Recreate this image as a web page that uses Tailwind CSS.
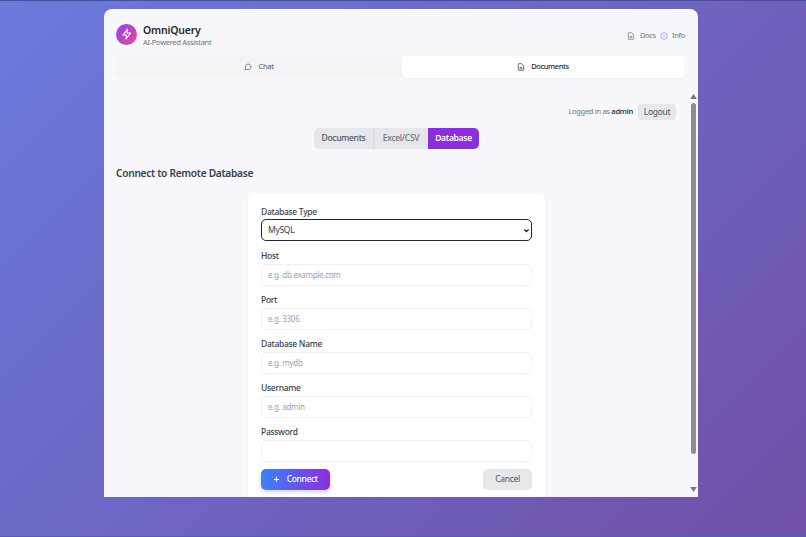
<!DOCTYPE html>
<html lang="en">
  <head>
    <meta charset="UTF-8" />
    <title>OmniQuery</title>
    <script src="https://cdn.jsdelivr.net/npm/@tailwindcss/browser@4"></script>
  </head>
  <body class="h-[537px] w-[806px] overflow-hidden border-t border-b border-t-[#474f8f] border-b-[#5d5cb4] bg-linear-[135deg,#6a7adc,#7150a8] font-['Noto_Sans',sans-serif] tracking-[-0.3px] text-[#374151]">
    <div class="w-[698px] pt-[8px] pl-[104px]">
      <div class="flex h-[488px] w-[594px] flex-col overflow-hidden rounded-t-[8px] bg-[#f8f8fc]">
        <!-- Header -->
        <div class="flex h-[47px] shrink-0 items-center justify-between pt-[3px] pr-[13px] pl-[12px]">
          <div class="flex items-center gap-[6px]">
            <div class="flex h-[21px] w-[21px] items-center justify-center rounded-full bg-linear-[135deg,#8b45e8,#ec4899]">
              <svg viewBox="0 0 24 24" class="h-[12px] w-[12px]" fill="none" stroke="white" stroke-width="2.2" stroke-linejoin="round"><path d="M13 2 4 14h7l-1 8 9-12h-7z" /></svg>
            </div>
            <div class="pt-[2px]">
              <div class="text-[10.5px] leading-[14px] font-semibold tracking-[-0.2px] text-[#1f2937]">OmniQuery</div>
              <div class="text-[7.5px] leading-[11px] text-[#6b7280]">AI-Powered Assistant</div>
            </div>
          </div>
          <div class="flex items-center pt-[3px] text-[7.5px] text-[#6b7280]">
            <svg viewBox="0 0 24 24" class="mr-[5px] h-[8px] w-[8px]" fill="none" stroke="#6b7280" stroke-width="2.2"><path d="M14 2H6a2 2 0 0 0-2 2v16a2 2 0 0 0 2 2h12a2 2 0 0 0 2-2V8zM8 13h8M8 17h8" /></svg>
            <span>Docs</span>
            <svg viewBox="0 0 24 24" class="mr-[4px] ml-[4px] h-[8px] w-[8px]" fill="none" stroke="#8b7fe8" stroke-width="2"><circle cx="12" cy="12" r="10" /><path d="M12 7v6M12 16v1" /></svg>
            <span>Info</span>
          </div>
        </div>

        <!-- Main tabs -->
        <div class="mr-[14px] ml-[12px] flex h-[22px] shrink-0 gap-[2px] rounded-[4px] bg-[#f4f4f6] text-[7.5px]">
          <div class="flex w-[284px] items-center justify-center gap-[6px] pl-[2px] text-[#4b5563]">
            <svg viewBox="0 0 24 24" class="h-[8px] w-[8px]" fill="none" stroke="#4b5563" stroke-width="2.2"><path d="M21 11.5a8.5 8.5 0 0 1-12.6 7.4L3 21l2-5A8.5 8.5 0 1 1 21 11.5z" /></svg>
            <span>Chat</span>
          </div>
          <div class="flex flex-1 items-center justify-center gap-[6px] rounded-[4px] bg-white font-medium tracking-[-0.4px] text-[#1f2937] shadow-[0_1px_2px_rgba(0,0,0,0.05)]">
            <svg viewBox="0 0 24 24" class="h-[8px] w-[8px]" fill="none" stroke="#374151" stroke-width="2.2"><path d="M14 2H6a2 2 0 0 0-2 2v16a2 2 0 0 0 2 2h12a2 2 0 0 0 2-2V8zM8 13h8M8 17h8" /></svg>
            <span>Documents</span>
          </div>
        </div>

        <div class="flex min-h-0 flex-1 pt-[16px]">
          <div class="min-w-0 flex-1 overflow-hidden">
            <!-- Login row -->
            <div class="mt-[10px] flex h-[16px] items-center justify-end gap-[5px] pr-[12px] text-[7.5px] text-[#6b7280]">
              <span>Logged in as <b class="font-semibold text-[#374151]">admin</b></span>
              <span class="flex h-[16px] w-[38px] items-center justify-center rounded-[4px] bg-[#e5e7eb] text-[8.5px] text-[#4b5563]">Logout</span>
            </div>

            <!-- Source tabs -->
            <div class="mt-[8px] flex justify-start pl-[210px] text-[8.5px] font-medium">
              <div class="flex h-[21px] overflow-hidden rounded-[5px]">
                <span class="flex w-[60px] items-center justify-center border-r border-[#d9dbe0] bg-[#e5e7eb] text-[#4b5563]">Documents</span>
                <span class="flex w-[54px] items-center justify-center bg-[#e5e7eb] text-[#6b7280]">Excel/CSV</span>
                <span class="flex w-[51px] items-center justify-center bg-[#8b2fdc] font-semibold text-white">Database</span>
              </div>
            </div>

            <h2 class="mt-[16px] pl-[12px] text-[10.2px] leading-[16px] font-semibold text-[#374151]">Connect to Remote Database</h2>

            <!-- Form -->
            <form class="mt-[12px] ml-[144px] h-[320px] w-[297px] rounded-[6px] bg-white px-[13px] pt-[13px] shadow-[0_1px_3px_rgba(0,0,0,0.04)]">
              <label class="block text-[8.5px] leading-[12px] font-medium text-[#374151]">Database Type</label>
              <div class="mt-[1px] flex h-[22px] items-center justify-between rounded-[5px] border-[1.5px] border-[#1f2937] pr-[1px] pl-[6px] text-[8.5px] text-[#374151]">
                <span>MySQL</span>
                <svg viewBox="0 0 10 10" class="h-[7px] w-[7px]" fill="none" stroke="#1f2937" stroke-width="1.8"><path d="M2 3.5 5 6.5 8 3.5" /></svg>
              </div>
              <label class="mt-[9px] block text-[8.5px] leading-[12px] font-medium text-[#374151]">Host</label>
              <div class="mt-[2px] flex h-[22px] items-center rounded-[5px] border border-[#f0f1f4] px-[6px] text-[8px] text-[#9ca3af]">e.g. db.example.com</div>
              <label class="mt-[8px] block text-[8.5px] leading-[12px] font-medium text-[#374151]">Port</label>
              <div class="mt-[2px] flex h-[22px] items-center rounded-[5px] border border-[#f0f1f4] px-[6px] text-[8px] text-[#9ca3af]">e.g. 3306</div>
              <label class="mt-[8px] block text-[8.5px] leading-[12px] font-medium text-[#374151]">Database Name</label>
              <div class="mt-[2px] flex h-[22px] items-center rounded-[5px] border border-[#f0f1f4] px-[6px] text-[8px] text-[#9ca3af]">e.g. mydb</div>
              <label class="mt-[8px] block text-[8.5px] leading-[12px] font-medium text-[#374151]">Username</label>
              <div class="mt-[2px] flex h-[22px] items-center rounded-[5px] border border-[#f0f1f4] px-[6px] text-[8px] text-[#9ca3af]">e.g. admin</div>
              <label class="mt-[8px] block text-[8.5px] leading-[12px] font-medium text-[#374151]">Password</label>
              <div class="mt-[2px] h-[22px] rounded-[5px] border border-[#f0f1f4]"></div>
              <div class="mt-[7px] flex items-center justify-between">
                <span class="flex h-[21px] w-[69px] items-center justify-center gap-[8px] rounded-[5px] bg-linear-[90deg,#3b82f6,#8b2fdc] text-[8.5px] font-medium tracking-[-0.4px] text-white shadow-[0_2px_4px_rgba(80,60,200,0.25)]"><span class="text-[10px]">+</span>Connect</span>
                <span class="flex h-[21px] w-[49px] items-center justify-center rounded-[5px] bg-[#e5e7eb] text-[8.5px] text-[#4b5563]">Cancel</span>
              </div>
            </form>
          </div>

          <!-- Scrollbar -->
          <div class="flex w-[10px] shrink-0 flex-col items-center">
            <svg viewBox="0 0 8 6" class="h-[5px] w-[7px]" fill="#777"><path d="M4 0 8 6H0z" /></svg>
            <div class="mt-[4px] h-[351px] w-[5px] rounded-full bg-[#8f8f8f]"></div>
            <svg viewBox="0 0 8 6" class="mt-[33px] h-[5px] w-[7px]" fill="#777"><path d="M0 0H8L4 6z" /></svg>
          </div>
        </div>
      </div>
    </div>
  </body>
</html>
